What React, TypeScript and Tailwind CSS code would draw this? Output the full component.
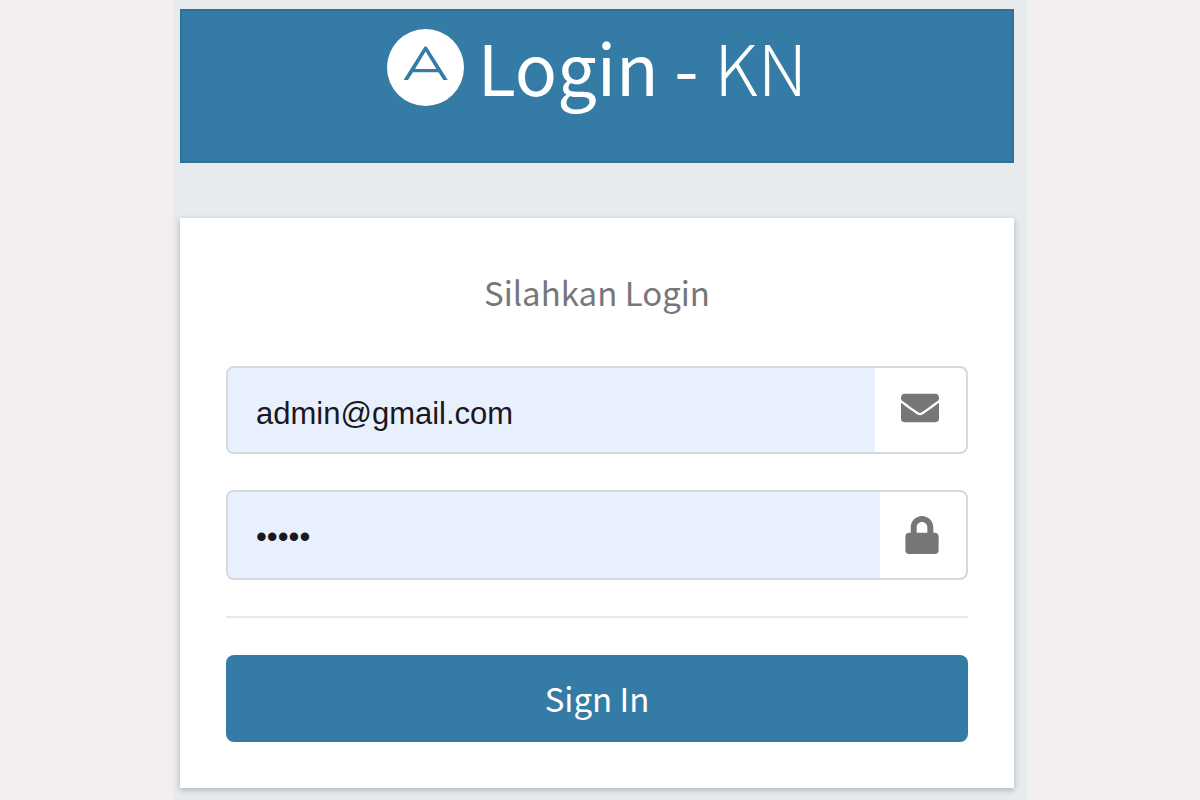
import { FaEnvelope, FaLock } from "react-icons/fa";

function Logo() {
  return (
    <svg viewBox="0 0 77 77" className="size-[77px] shrink-0" aria-hidden="true">
      <circle cx="38.5" cy="38.5" r="38.5" fill="#fff" />
      <path
        d="M37.6 17.5h2L60.8 51h-4.4l-5-7.7H26L21 51h-4.4ZM38.6 22.6 28 40h21.4Z"
        fill="#347ca5"
        fillRule="evenodd"
      />
    </svg>
  );
}

const fieldBox =
  "flex overflow-hidden rounded-lg border-2 border-[#d3d9de] bg-white text-[#777779]";
const fieldInput =
  "min-w-0 flex-1 bg-[#e8f0fe] px-7 font-['Liberation_Sans',Arial,sans-serif] text-[31px] text-[#1b1720] outline-none";

export default function App() {
  return (
    <div className="min-h-screen bg-[#f1eeed] font-['Noto_Sans_CJK_SC',sans-serif]">
      <main className="mx-auto min-h-screen w-full max-w-[854px] bg-[#e7ebee] pt-[9px] pr-[13px] pb-[11px] pl-[7px]">
        <header className="flex h-[154px] items-start justify-center gap-[14px] border-2 border-[#2f7198] bg-[#347ca5] pt-[18px] text-white">
          <Logo />
          <h1 className="text-[70px] leading-[74px] font-normal">
            Login - <span className="font-light">KN</span>
          </h1>
        </header>

        <form
          className="mt-[55px] bg-white px-[46px] pt-[49px] pb-[46px] shadow-[0_2px_6px_rgba(0,0,0,0.25)]"
          onSubmit={(e) => e.preventDefault()}
        >
          <p className="text-center text-[33px] leading-[50px] text-[#777779]">Silahkan Login</p>

          <div className={`${fieldBox} mt-[49px] h-[88px]`}>
            <input
              type="email"
              aria-label="Email"
              defaultValue="admin@gmail.com"
              className={`${fieldInput} pt-2`}
            />
            <span className="flex w-[91px] items-center justify-center pr-0.5 pb-1">
              <FaEnvelope size={38} />
            </span>
          </div>

          <div className={`${fieldBox} mt-9 h-[90px]`}>
            <input
              type="password"
              aria-label="Password"
              defaultValue="admin"
              className={`${fieldInput} pt-1`}
            />
            <span className="flex w-[86px] items-center justify-center pr-0.5">
              <FaLock size={38} />
            </span>
          </div>

          <hr className="mt-9 border-t-2 border-[#e7e8ea]" />

          <button
            type="submit"
            className="mt-[37px] h-[87px] w-full rounded-lg bg-[#347ca5] pb-0.5 text-[33px] leading-[50px] text-white"
          >
            Sign In
          </button>
        </form>
      </main>
    </div>
  );
}
